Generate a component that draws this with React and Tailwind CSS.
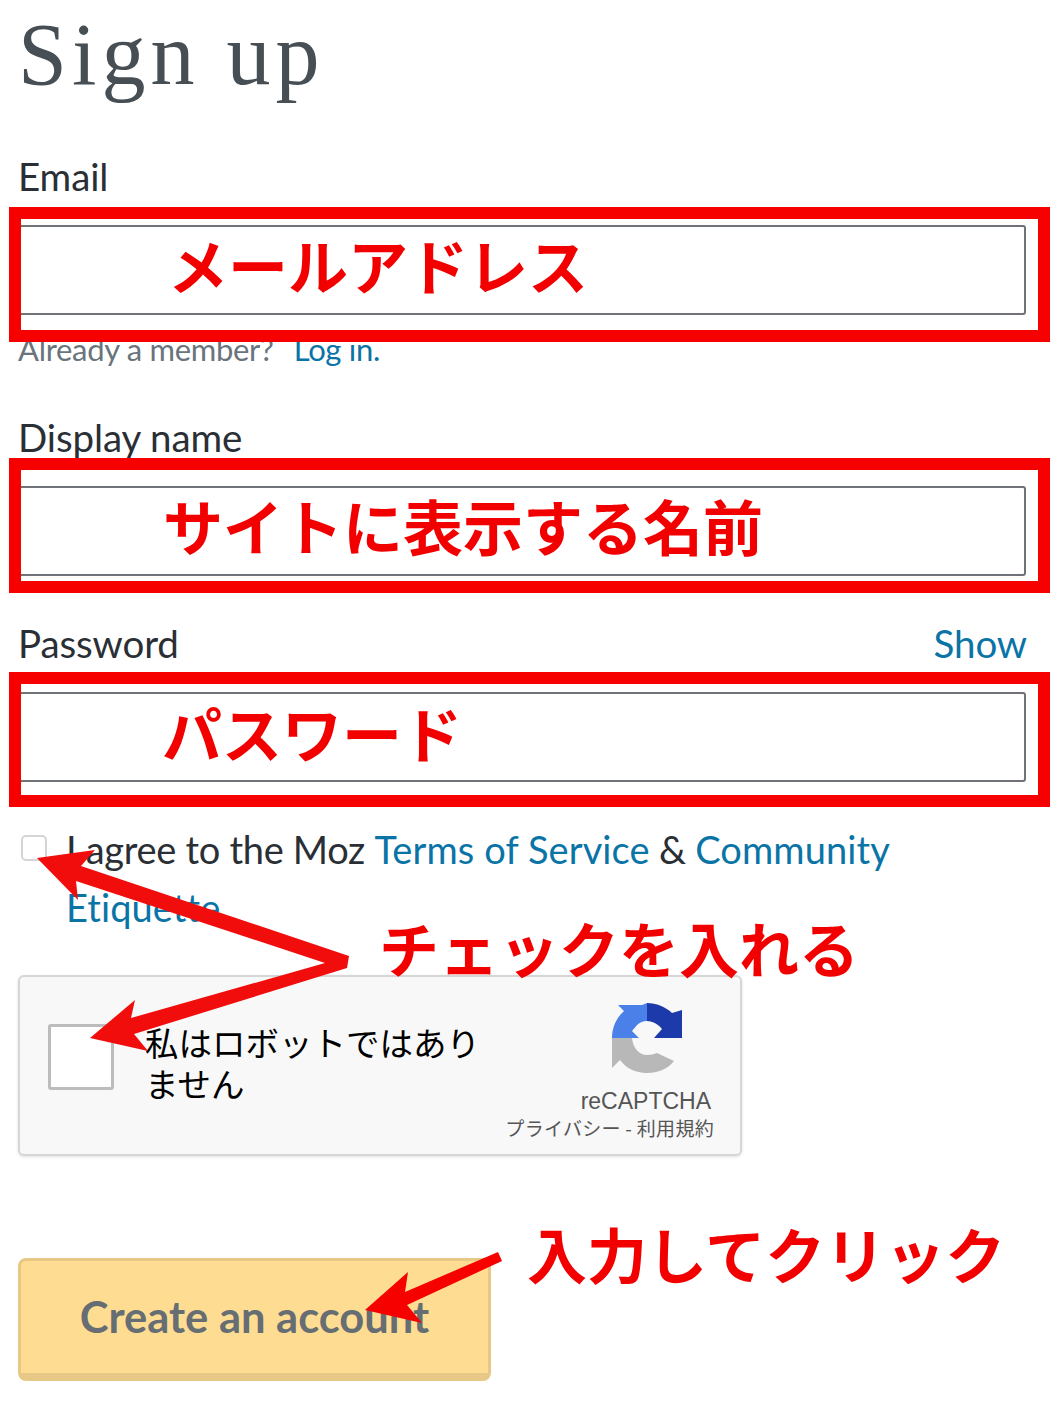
import React from 'react';

const cjk = "font-['Noto_Sans_CJK_JP',sans-serif]";

const Field = ({ label, right, className = '' }) => (
  <div className={className}>
    <div className="flex items-center justify-between h-[48px] leading-[48px]">
      <label className="text-[38.5px] tracking-[-0.1px] text-[#2a2f36]">{label}</label>
      {right && <a className="text-[38.5px] tracking-[-0.1px] text-[#0a74a6]">{right}</a>}
    </div>
    <input className="block mt-[25px] w-[1008px] h-[90px] border-2 border-[#6f7276] rounded-[3px] bg-white" />
  </div>
);

// red frames, labels and arrows drawn over the form
const Note = ({ className = '', children }) => (
  <span className={`absolute whitespace-nowrap text-[#f20000] font-bold text-[60px] leading-[70px] ${cjk} ${className}`}>
    {children}
  </span>
);

const Frame = ({ className = '' }) => (
  <div className={`absolute left-[9px] w-[1041px] h-[135px] border-[12px] border-[#f60000] ${className}`} />
);

const Annotations = () => (
  <div className="absolute inset-0 pointer-events-none">
    <Frame className="top-[207px]" />
    <Frame className="top-[458px]" />
    <Frame className="top-[672px]" />
    <Note className="left-[168px] top-[229px]">メールアドレス</Note>
    <Note className="left-[163px] top-[490px]">サイトに表示する名前</Note>
    <Note className="left-[162px] top-[697px]">パスワード</Note>
    <Note className="left-[379px] top-[912px]">チェックを入れる</Note>
    <Note className="left-[527px] top-[1218px]">入力してクリック</Note>
    <svg className="absolute inset-0" width="1060" height="1408" viewBox="0 0 1060 1408">
      <polygon
        fill="#f20d0d"
        points="37,858 95,850 81,866 349,956 347,968 134,1034 148,1051 90,1038 135,1000 131,1018 325,963 76,881 78,900"
      />
      <polygon
        fill="#f60000"
        points="498,1252 502,1261 407,1305 422,1323 365,1310 408,1272 405,1292"
      />
    </svg>
  </div>
);

const RecaptchaLogo = () => (
  <svg width="70" height="70" viewBox="0 0 70 70">
    <path fill="#b8b8b8" d="M0 35H20C21 45 27 52 35 52C39 52 42 51 45 50L62 58C56 66 46 70 35 70C23 70 14 65 8 57L0 65Z" />
    <path fill="#4a80e8" d="M35 0V18C31 18 27 20 25 22L20 28L27 35H0C0 24 5 14 12 8L6 2H30Z" />
    <path fill="#1c3aa9" d="M35 0C44 0 54 4 60 10L70 7V35H42L50 26C47 22 41 18 35 18Z" />
  </svg>
);

const Recaptcha = () => (
  <div className="flex w-[724px] h-[181px] mt-[39px] bg-[#f8f8f8] border-2 border-[#d6d6d6] rounded-[6px] shadow-[0_1px_3px_rgba(0,0,0,0.12)]">
    <div className="w-[66px] h-[66px] ml-[28px] mt-[47px] bg-white border-[3px] border-[#bcbcbc] rounded-[3px]" />
    <div className={`ml-[31px] mt-[44px] w-[345px] text-[33.5px] leading-[41px] text-black ${cjk}`}>
      私はロボットではありません
    </div>
    <div className="ml-auto mr-[26px] mt-[26px] flex flex-col items-end">
      <div className="mr-[32px]">
        <RecaptchaLogo />
      </div>
      <div className="mt-[12px] mr-[3px] text-[23px] leading-[32px] text-[#555] font-['Liberation_Sans',sans-serif]">
        reCAPTCHA
      </div>
      <div className={`-mt-[1px] text-[19px] leading-[24px] whitespace-nowrap text-[#555] tracking-[0.3px] ${cjk}`}>
        プライバシー - 利用規約
      </div>
    </div>
  </div>
);

export default function App() {
  return (
    <div className="relative w-[1060px] h-[1408px] bg-white overflow-hidden font-['Lato',sans-serif]">
      <div className="w-[1027px] pl-[18px]">
        <h1 className="h-[112px] text-[88px] leading-[110px] tracking-[5px] font-light text-[#474f54] font-['Liberation_Serif',serif]">
          Sign up
        </h1>

        <Field label="Email" className="mt-[40px]" />
        <p className="mt-[13px] h-[42px] text-[31px] leading-[42px] tracking-[-0.3px] text-[#6a747c]">
          Already a member?
          <a className="ml-[20px] text-[#0a74a6]">Log in.</a>
        </p>

        <Field label="Display name" className="mt-[43px]" />
        <Field label="Password" right="Show" className="mt-[43px]" />

        <div className="flex mt-[38px] text-[38px] leading-[58px] tracking-[-0.3px] text-[#2a2f36]">
          <input type="checkbox" className="appearance-none shrink-0 w-[26px] h-[26px] mt-[15px] ml-[3px] border-2 border-[#d5d5d5] rounded-[5px] bg-white" />
          <div className="ml-[19px] w-[880px]">
            I agree to the Moz <a className="tracking-[0.1px] text-[#0a74a6]">Terms of Service</a> &amp; <a className="tracking-[0.1px] text-[#0a74a6]">Community Etiquette</a>
          </div>
        </div>

        <Recaptcha />

        <button className="block mt-[102px] w-[473px] h-[123px] bg-[#fedd92] border-[3px] border-b-[8px] border-[#e8c887] rounded-[8px] text-[43.5px] font-bold text-[#666d73]">
          Create an account
        </button>
      </div>
      <Annotations />
    </div>
  );
}
